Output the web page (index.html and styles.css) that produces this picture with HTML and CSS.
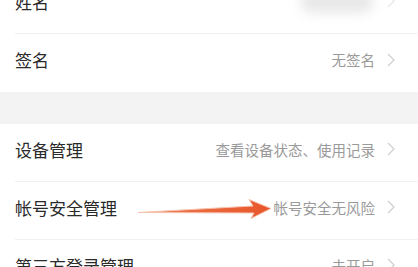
FILE: index.html
```html
<!DOCTYPE html>
<html lang="zh-CN">
<head>
<meta charset="utf-8">
<link rel="stylesheet" href="styles.css">
</head>
<body>
<div class="page">
  <div class="group">
    <div class="row">
      <span class="label">姓名</span>
      <span class="value"><span class="blurred"></span></span>
      <svg class="chev faint" viewBox="0 0 8 14"><path d="M1 1 L7 7 L1 13" /></svg>
    </div>
    <div class="row last">
      <span class="label">签名</span>
      <span class="value">无签名</span>
      <svg class="chev" viewBox="0 0 8 14"><path d="M1 1 L7 7 L1 13" /></svg>
    </div>
  </div>
  <div class="gap"></div>
  <div class="group">
    <div class="row">
      <span class="label">设备管理</span>
      <span class="value">查看设备状态、使用记录</span>
      <svg class="chev" viewBox="0 0 8 14"><path d="M1 1 L7 7 L1 13" /></svg>
    </div>
    <div class="row">
      <span class="label">帐号安全管理</span>
      <span class="value">帐号安全无风险</span>
      <svg class="chev" viewBox="0 0 8 14"><path d="M1 1 L7 7 L1 13" /></svg>
    </div>
    <div class="row">
      <span class="label">第三方登录管理</span>
      <span class="value">未开启</span>
      <svg class="chev" viewBox="0 0 8 14"><path d="M1 1 L7 7 L1 13" /></svg>
    </div>
  </div>
</div>
<svg class="arrow" width="418" height="267" viewBox="0 0 418 267">
  <defs>
    <linearGradient id="ag" x1="0" y1="0" x2="1" y2="0">
      <stop offset="0" stop-color="#f3a489"/>
      <stop offset="0.35" stop-color="#ec6d43"/>
      <stop offset="1" stop-color="#e8562a"/>
    </linearGradient>
  </defs>
  <polygon points="138,212.5 253,206 249,199.5 271,208.5 251,218.5 254,213" fill="url(#ag)" stroke="#f6c3ae" stroke-width="1" stroke-linejoin="round"/>
</svg>
</body>
</html>
```
FILE: styles.css
```css
html, body {
  margin: 0;
  padding: 0;
  background: #ffffff;
  width: 418px;
  height: 267px;
  overflow: hidden;
}
body {
  font-family: "Noto Sans CJK SC", "Noto Sans", sans-serif;
  position: relative;
}
.page {
  margin-top: -24px;
}
.group {
  background: #ffffff;
  padding-left: 15px;
}
.row {
  box-sizing: border-box;
  display: flex;
  align-items: center;
  height: 58px;
  padding-bottom: 7px;
  border-bottom: 1px solid #f0f0f0;
  padding-right: 23px;
}
.row.last {
  border-bottom: none;
}
.label {
  flex: 1;
  font-size: 17px;
  color: #2a2a2a;
}
.value {
  font-size: 14.5px;
  color: #9a9a9a;
  margin-right: 12px;
  display: flex;
  align-items: center;
}
.blurred {
  display: block;
  width: 72px;
  height: 24px;
  background: #e8e8e8;
  border-radius: 10px;
  filter: blur(6px);
  margin-right: 2px;
}
.chev {
  width: 8px;
  height: 14px;
  fill: none;
  stroke: #cfcfcf;
  stroke-width: 1.2;
}
.chev.faint {
  stroke: #e6e6e6;
}
.gap {
  height: 32px;
  background: #f3f3f3;
}
.arrow {
  position: absolute;
  left: 0;
  top: 0;
}
```
